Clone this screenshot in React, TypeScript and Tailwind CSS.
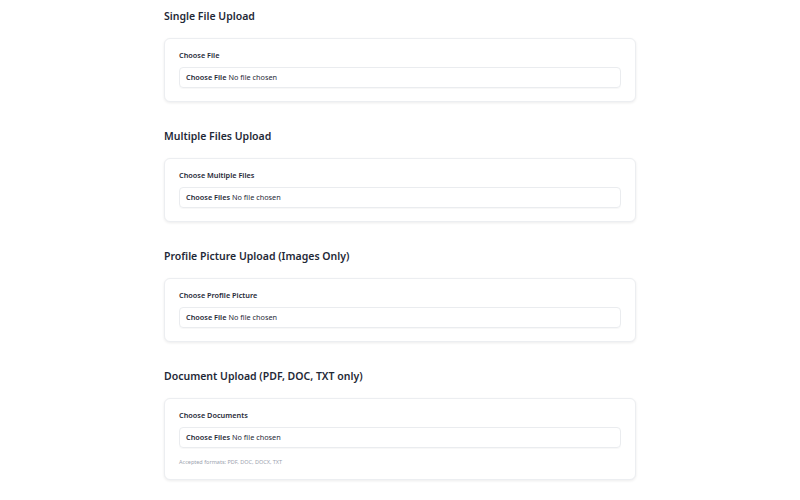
import React from 'react';

type Section = {
    title: string;
    label: string;
    button: string;
    hint?: string;
};

const sections: Section[] = [
    { title: 'Single File Upload', label: 'Choose File', button: 'Choose File' },
    { title: 'Multiple Files Upload', label: 'Choose Multiple Files', button: 'Choose Files' },
    { title: 'Profile Picture Upload (Images Only)', label: 'Choose Profile Picture', button: 'Choose File' },
    {
        title: 'Document Upload (PDF, DOC, TXT only)',
        label: 'Choose Documents',
        button: 'Choose Files',
        hint: 'Accepted formats: PDF, DOC, DOCX, TXT',
    },
];

function UploadSection({ section }: { section: Section }) {
    return (
        <section className="mb-[26px]">
            <h2 className="text-[10.5px] leading-[16px] font-semibold text-[#1f2937] mb-[14px]">{section.title}</h2>
            <div className="rounded-[6px] border border-[#eceef1] bg-white shadow-[0_1px_3px_rgba(0,0,0,0.08)] px-[14px] pt-[11px] pb-[13px]">
                <div className="text-[7.3px] leading-[10px] font-semibold text-[#1f2937] mb-[7px]">{section.label}</div>
                <div className="h-[21px] flex items-center rounded-[4px] border border-[#eaecef] shadow-[0_1px_1px_rgba(0,0,0,0.03)] px-[6px] text-[7.3px] text-[#1f2937]">
                    <span className="font-semibold mr-[2px]">{section.button}</span>
                    <span>No file chosen</span>
                </div>
                {section.hint && (
                    <div className="text-[5.5px] leading-[8px] text-[#9ca3af] mt-[10px]">{section.hint}</div>
                )}
            </div>
        </section>
    );
}

export default function App() {
    return (
        <div className="min-h-screen bg-white font-['Noto_Sans','Open_Sans',sans-serif]">
            <main className="w-[472px] mx-auto pt-[8px]">
                {sections.map((s) => (
                    <UploadSection key={s.title} section={s} />
                ))}
            </main>
        </div>
    );
}
